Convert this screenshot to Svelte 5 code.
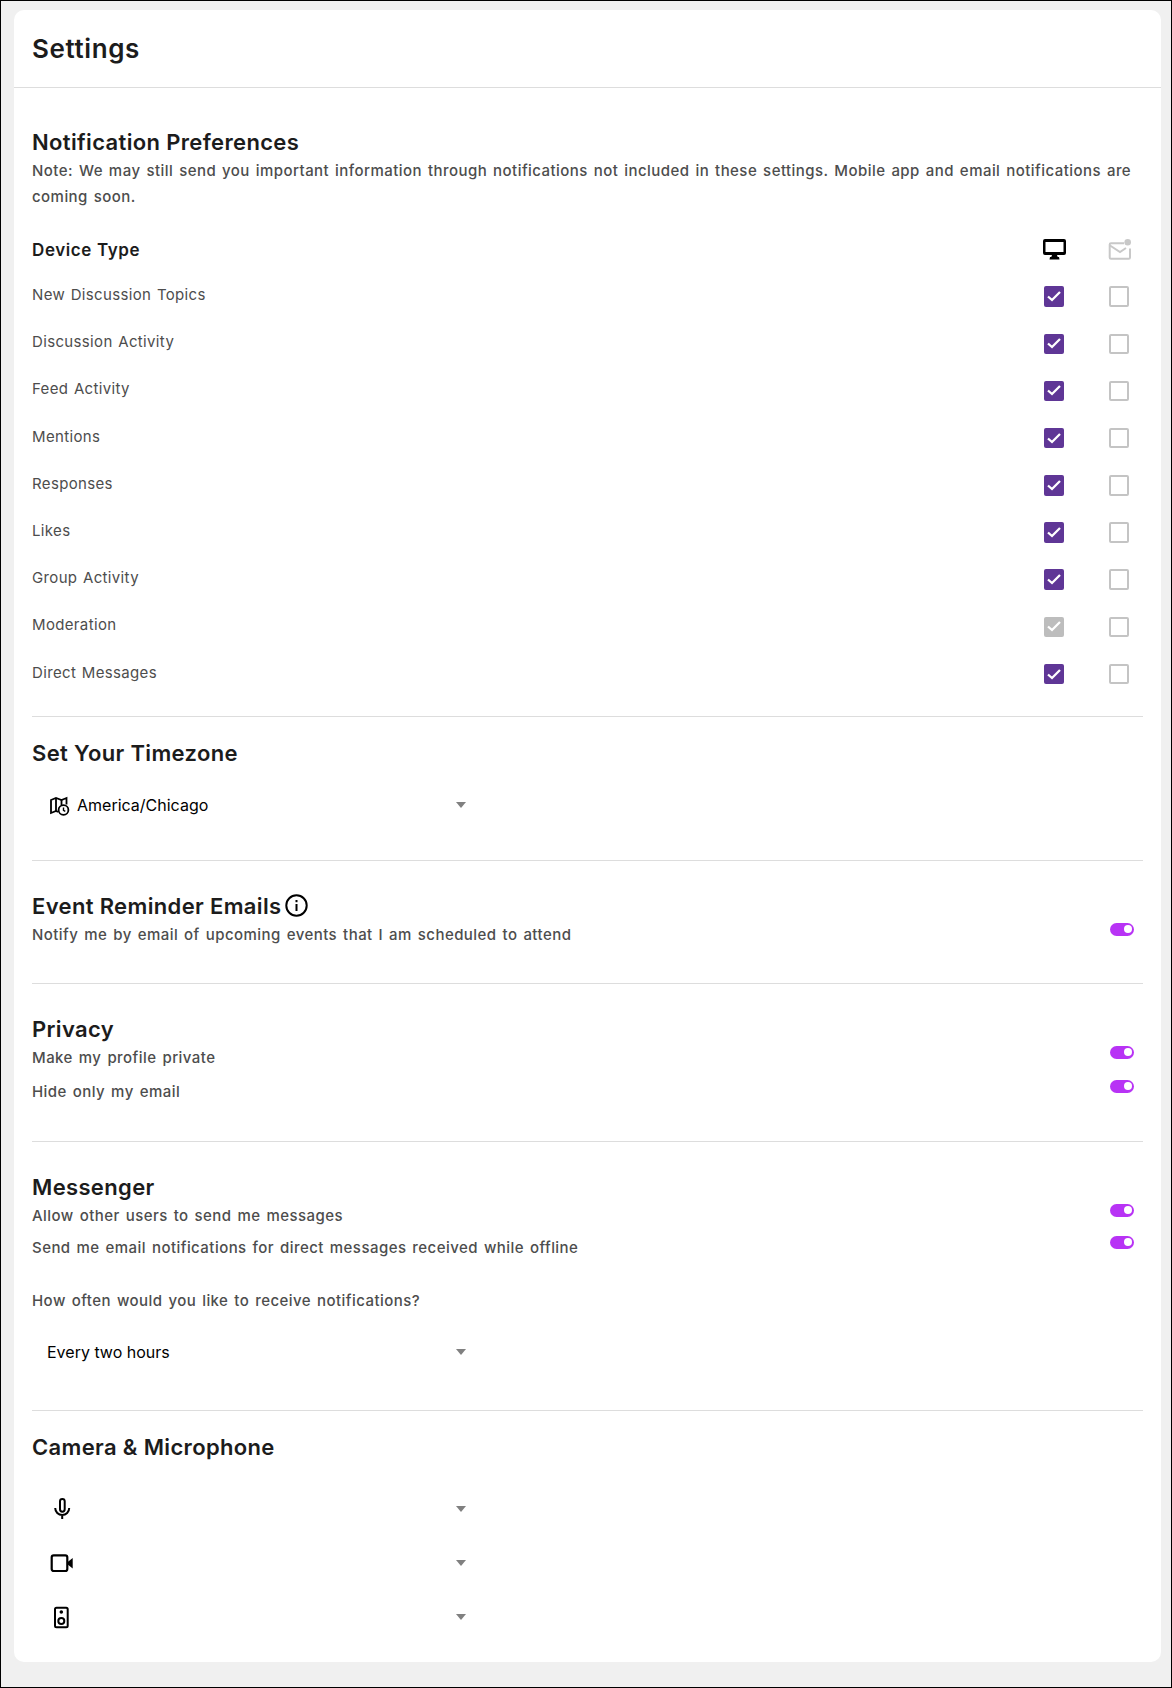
<script lang="ts">
  const topics = [
    'New Discussion Topics',
    'Discussion Activity',
    'Feed Activity',
    'Mentions',
    'Responses',
    'Likes',
    'Group Activity',
    'Moderation',
    'Direct Messages',
  ];
</script>

{#snippet check(on: boolean, disabled = false)}
  <span class="check" class:on class:disabled>
    {#if on}
      <svg width="14" height="11" viewBox="0 0 14 11" fill="none" aria-hidden="true">
        <path d="M1 5.500L5 9L13 1" stroke="#fff" stroke-width="2.300" />
      </svg>
    {/if}
  </span>
{/snippet}

{#snippet toggle()}
  <span class="toggle"><span class="thumb"></span></span>
{/snippet}

{#snippet arrow()}
  <span class="arrow"></span>
{/snippet}

<div class="frame">
  <div class="card">
    <header class="card-header"><h1>Settings</h1></header>

    <!-- Notification Preferences -->
    <section class="section notif">
      <h2>Notification Preferences</h2>
      <p class="note">Note: We may still send you important information through notifications not included in these settings. Mobile app and email notifications are coming soon.</p>
      <div class="device-row">
        <span class="device-label">Device Type</span>
        <span class="cell">
          <svg width="23" height="21" viewBox="0 0 23 21" aria-hidden="true">
            <path fill="#000" fill-rule="evenodd" d="M2 0h19a2 2 0 0 1 2 2v12a2 2 0 0 1-2 2h-7l.7 2h1.300l.5 2.500H6.500l.5-2.500h1.300l.7-2H2a2 2 0 0 1-2-2V2a2 2 0 0 1 2-2zm.5 3v10h18V3z" />
          </svg>
        </span>
        <span class="cell">
          <svg width="24" height="21" viewBox="0 0 24 21" fill="none" aria-hidden="true">
            <path d="M17 4.300H4a1.300 1.300 0 0 0-1.300 1.300v12.800A1.300 1.300 0 0 0 4 19.700h17.700A1.300 1.300 0 0 0 23 18.400V9.500" stroke="#c8c8c8" stroke-width="2" />
            <path d="M3 6.500l10 6.500 6-4" stroke="#c8c8c8" stroke-width="2" />
            <circle cx="20.700" cy="3.300" r="3.300" fill="#c8c8c8" />
          </svg>
        </span>
      </div>
      {#each topics as topic}
        <div class="topic-row">
          <span class="topic">{topic}</span>
          <span class="cell">{@render check(true, topic === 'Moderation')}</span>
          <span class="cell">{@render check(false)}</span>
        </div>
      {/each}
    </section>

    <!-- Timezone -->
    <section class="section tz">
      <h2>Set Your Timezone</h2>
      <div class="select">
        <svg class="map-icon" width="21" height="22" viewBox="0 -2 21 22" fill="none" stroke="#000" stroke-width="1.800" aria-hidden="true">
          <path d="M8 15.800L6 15l-5 2V4l5-2 5.500 2 5-2v6.500" />
          <path d="M6 2v13M11.500 4v5" />
          <circle cx="13.500" cy="14" r="4.900" />
          <path d="M13.500 11.500v2.800l1.800 1" stroke-width="1.400" />
        </svg>
        <span class="value">America/Chicago</span>
        {@render arrow()}
      </div>
    </section>

    <!-- Event reminders -->
    <section class="section event">
      <h2 class="with-icon">
        Event Reminder Emails
        <svg width="23" height="23" viewBox="0 0 23 23" fill="none" aria-hidden="true">
          <circle cx="11.500" cy="11.500" r="10.200" stroke="#000" stroke-width="2" />
          <rect x="10.500" y="10" width="2" height="7" fill="#000" />
          <rect x="10.500" y="6" width="2" height="2.200" fill="#000" />
        </svg>
      </h2>
      <div class="toggle-row">
        <span class="desc">Notify me by email of upcoming events that I am scheduled to attend</span>
        {@render toggle()}
      </div>
    </section>

    <!-- Privacy -->
    <section class="section privacy">
      <h2>Privacy</h2>
      <div class="toggle-row">
        <span class="desc">Make my profile private</span>
        {@render toggle()}
      </div>
      <div class="toggle-row second">
        <span class="desc">Hide only my email</span>
        {@render toggle()}
      </div>
    </section>

    <!-- Messenger -->
    <section class="section messenger">
      <h2>Messenger</h2>
      <div class="toggle-row">
        <span class="desc">Allow other users to send me messages</span>
        {@render toggle()}
      </div>
      <div class="toggle-row third">
        <span class="desc">Send me email notifications for direct messages received while offline</span>
        {@render toggle()}
      </div>
      <p class="desc how">How often would you like to receive notifications?</p>
      <div class="select">
        <span class="value">Every two hours</span>
        {@render arrow()}
      </div>
    </section>

    <!-- Camera and microphone -->
    <section class="section devices">
      <h2>Camera &amp; Microphone</h2>
      <div class="device-selects">
        <div class="select">
          <svg class="dev-icon" width="24" height="24" viewBox="0 0 24 24" fill="none" stroke="#000" stroke-width="2" aria-hidden="true">
            <rect x="10" y="2" width="4.700" height="12.700" rx="2.350" />
            <path d="M5.200 11a7 7 0 0 0 14 0M12.200 18v4" />
          </svg>
          {@render arrow()}
        </div>
        <div class="select">
          <svg class="dev-icon" width="24" height="24" viewBox="0 0 24 24" aria-hidden="true">
            <rect x="1.700" y="4.300" width="15.600" height="15.700" rx="2" fill="none" stroke="#000" stroke-width="2.200" />
            <path d="M18 10.800L22.700 7V17.500L18 13.700z" fill="#000" />
          </svg>
          {@render arrow()}
        </div>
        <div class="select">
          <svg class="dev-icon" width="24" height="24" viewBox="0 0 24 24" fill="none" stroke="#000" stroke-width="2" aria-hidden="true">
            <rect x="5" y="2.700" width="12.700" height="19.600" rx="1.500" />
            <circle cx="11.300" cy="16" r="3" />
            <circle cx="11.300" cy="7" r="1.800" fill="#000" stroke="none" />
          </svg>
          {@render arrow()}
        </div>
      </div>
    </section>
  </div>
</div>

<style>
  :global(body) {
    margin: 0;
  }

  .frame {
    box-sizing: border-box;
    width: 1172px;
    height: 1688px;
    border: 1px solid #000;
    padding: 9px 10px 25px 13px;
    background: #f0f0f0;
    font-family: Inter, 'Noto Sans', sans-serif;
  }

  .card {
    height: 100%;
    background: #fff;
    border-radius: 10px;
    overflow: hidden;
  }

  .card-header {
    box-sizing: border-box;
    height: 78px;
    display: flex;
    align-items: center;
    padding: 0 18px;
    border-bottom: 1px solid #ddd;
  }

  h1 {
    margin: 0;
    font-size: 26px;
    letter-spacing: 0.6px;
    font-weight: 600;
    color: #1c1c1c;
  }

  h2 {
    margin: 0;
    font-size: 22px;
    letter-spacing: 0.35px;
    line-height: 28px;
    font-weight: 600;
    color: #1c1c1c;
  }

  .with-icon {
    display: flex;
    align-items: center;
    gap: 4px;
  }

  .section {
    margin: 0 18px;
    border-bottom: 1px solid #ddd;
  }

  .section:last-child {
    border-bottom: none;
  }

  .notif {
    padding: 40px 0 18px;
  }

  .tz {
    padding: 22px 0 28px;
  }

  .event {
    padding: 31px 0 35px;
  }

  .privacy {
    padding: 31px 0 36px;
  }

  .messenger {
    padding: 31px 0 31px;
  }

  .devices {
    padding: 22px 0 0;
  }

  .note {
    margin: 2px 0 0;
    font-size: 15px;
    line-height: 26px;
    font-weight: 500;
    letter-spacing: 0.45px;
    word-spacing: 1.5px;
    color: #4d4d4d;
  }

  .device-row,
  .topic-row {
    display: flex;
    align-items: center;
  }

  .device-row {
    height: 47px;
    margin-top: 16px;
  }

  .device-label {
    flex: 1;
    font-size: 17px;
    letter-spacing: 0.6px;
    font-weight: 600;
    color: #1c1c1c;
  }

  .topic-row {
    height: 47.2px;
  }

  .topic {
    flex: 1;
    padding-bottom: 4px;
    font-size: 15px;
    letter-spacing: 0.35px;
    word-spacing: 1px;
    color: #4d4d4d;
  }

  .cell {
    width: 24px;
    margin-left: 41px;
    display: flex;
    justify-content: center;
  }

  .cell:last-child {
    margin-right: 12px;
  }

  .check {
    box-sizing: border-box;
    width: 20.500px;
    height: 20.500px;
    border-radius: 2px;
    border: 2px solid #c4c4c4;
    display: flex;
    align-items: center;
    justify-content: center;
  }

  .check.on {
    border: none;
    background: #5f3696;
  }

  .check.disabled {
    background: #bdbdbd;
  }

  .toggle-row {
    display: flex;
    justify-content: space-between;
    align-items: flex-start;
    margin-top: 2px;
    padding-right: 9px;
  }

  .toggle-row.second {
    margin-top: 8px;
  }

  .toggle-row.third {
    margin-top: 6px;
  }

  .desc {
    font-size: 15px;
    line-height: 26px;
    font-weight: 500;
    letter-spacing: 0.45px;
    word-spacing: 1.5px;
    color: #4d4d4d;
  }

  .how {
    margin: 27px 0 11px;
  }

  .toggle {
    position: relative;
    width: 24px;
    height: 13px;
    margin-top: 1px;
    border-radius: 7px;
    background: #b833f5;
  }

  .thumb {
    position: absolute;
    top: 2.500px;
    right: 2.500px;
    width: 8px;
    height: 8px;
    border-radius: 50%;
    background: #fff;
  }

  .select {
    width: 448px;
    height: 54px;
    display: flex;
    align-items: center;
    padding: 0 14px 0 15px;
    box-sizing: border-box;
  }

  .map-icon {
    margin: 0 6px 0 3px;
    flex-shrink: 0;
  }

  .dev-icon {
    margin-left: 3px;
  }

  .value {
    font-size: 16px;
    color: #000;
  }

  .arrow {
    margin-left: auto;
    width: 0;
    height: 0;
    border-left: 5.500px solid transparent;
    border-right: 5.500px solid transparent;
    border-top: 6px solid #808080;
  }

  .tz .select {
    margin-top: 11px;
  }

  .device-selects {
    margin-top: 21px;
  }
</style>
